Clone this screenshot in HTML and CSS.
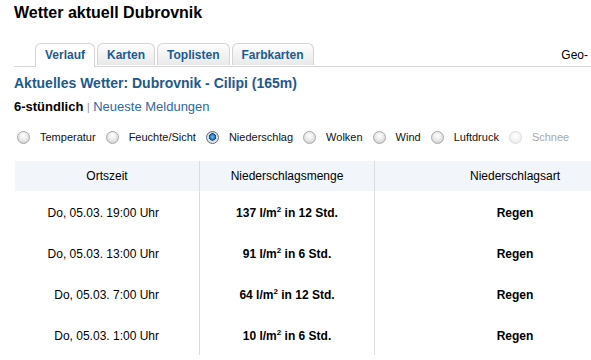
FILE: index.html
```html
<!DOCTYPE html>
<html lang="de">
<head>
<meta charset="utf-8">
<title>Wetter aktuell Dubrovnik</title>
<link rel="stylesheet" href="styles.css">
</head>
<body>
<div class="page">
  <h1 class="title">Wetter aktuell Dubrovnik</h1>
  <div class="tabbar">
    <ul class="tabs">
      <li class="tab active">Verlauf</li>
      <li class="tab">Karten</li>
      <li class="tab">Toplisten</li>
      <li class="tab">Farbkarten</li>
    </ul>
    <span class="geo">Geo-</span>
  </div>
  <h2 class="station">Aktuelles Wetter: Dubrovnik - Cilipi (165m)</h2>
  <div class="sub"><b>6-stündlich</b> <span class="sep">|</span> <a class="link">Neueste Meldungen</a></div>
  <div class="radios">
    <label class="opt"><span class="radio"></span>Temperatur</label>
    <label class="opt"><span class="radio"></span>Feuchte/Sicht</label>
    <label class="opt"><span class="radio checked"></span>Niederschlag</label>
    <label class="opt"><span class="radio"></span>Wolken</label>
    <label class="opt"><span class="radio"></span>Wind</label>
    <label class="opt"><span class="radio"></span>Luftdruck</label>
    <label class="opt disabled"><span class="radio"></span>Schnee</label>
  </div>
  <table class="data">
    <thead>
      <tr><th class="c1">Ortszeit</th><th class="c2">Niederschlagsmenge</th><th class="c3">Niederschlagsart</th></tr>
    </thead>
    <tbody>
      <tr><td class="c1">Do, 05.03. 19:00 Uhr</td><td class="c2">137 l/m<sup>2</sup> in 12 Std.</td><td class="c3">Regen</td></tr>
      <tr><td class="c1">Do, 05.03. 13:00 Uhr</td><td class="c2">91 l/m<sup>2</sup> in 6 Std.</td><td class="c3">Regen</td></tr>
      <tr><td class="c1">Do, 05.03. 7:00 Uhr</td><td class="c2">64 l/m<sup>2</sup> in 12 Std.</td><td class="c3">Regen</td></tr>
      <tr><td class="c1">Do, 05.03. 1:00 Uhr</td><td class="c2">10 l/m<sup>2</sup> in 6 Std.</td><td class="c3">Regen</td></tr>
    </tbody>
  </table>
</div>
</body>
</html>
```
FILE: styles.css
```css
html, body {
  margin: 0;
  padding: 0;
  background: #fff;
}
body {
  font-family: "Liberation Sans", Arial, sans-serif;
  color: #000;
  overflow: hidden;
}
.page {
  width: 577px;
  height: 360px;
  padding-left: 14px;
  overflow: hidden;
}
.title {
  margin: 0;
  padding-top: 4px;
  font-size: 16px;
  line-height: 18px;
  font-weight: bold;
}
.tabbar {
  margin-top: 21px;
  display: flex;
  align-items: flex-end;
  border-bottom: 1px solid #d6d6d6;
  height: 23px;
}
.tabs {
  list-style: none;
  margin: 0;
  padding: 0 0 0 21px;
  display: flex;
  gap: 2px;
}
.tab {
  height: 22px;
  box-sizing: border-box;
  padding: 0 9px;
  border: 1px solid #d4d4d4;
  border-bottom: none;
  border-radius: 6px 6px 0 0;
  background: linear-gradient(#fdfdfd, #e9e9e9);
  font-size: 12px;
  font-weight: bold;
  line-height: 22px;
  color: #1d5a94;
}
.tab.active {
  height: 24px;
  margin-bottom: -1px;
  background: #fff;
  line-height: 22px;
}
.geo {
  margin-left: auto;
  font-size: 12px;
  line-height: 22px;
  padding-right: 3px;
}
.station {
  margin: 0;
  padding-top: 8px;
  font-size: 14px;
  line-height: 17px;
  font-weight: bold;
  color: #22598b;
}
.sub {
  margin-top: 7px;
  font-size: 13px;
  line-height: 16px;
}
.sep {
  color: #888;
  font-size: 10px;
}
.link {
  color: #2d69a6;
}
.radios {
  display: flex;
  align-items: center;
  margin-top: 13px;
  padding-left: 3px;
  height: 16px;
  font-size: 11px;
  color: #111;
}
.opt {
  display: flex;
  align-items: center;
  margin-right: 10px;
}
.radio {
  width: 11px;
  height: 11px;
  border-radius: 50%;
  border: 1px solid #a8a8a8;
  background: radial-gradient(circle at 50% 35%, #ffffff 0%, #e8e8e8 50%, #c4c4c4 100%);
  margin-right: 10px;
  box-sizing: content-box;
}
.radio.checked {
  border-color: #5a6b7a;
  background: radial-gradient(circle at 50% 45%, #7ec3f2 0%, #1e78c8 30%, #0f3d66 42%, #d9dde2 48%, #f2f2f2 100%);
}
.opt.disabled {
  color: #a8a8a8;
}
.opt.disabled .radio {
  border-color: #dcdcdc;
  background: radial-gradient(circle at 50% 35%, #ffffff 0%, #f2f2f2 60%, #e2e2e2 100%);
}
.data {
  margin-top: 16px;
  margin-left: 1px;
  width: 640px;
  border-collapse: collapse;
  table-layout: fixed;
  font-size: 12px;
}
.data th {
  background: #f2f5f9;
  font-weight: normal;
  height: 30px;
  padding: 0;
  text-align: center;
}
.data td {
  height: 38px;
  padding: 3px 0 0;
  text-align: center;
  font-weight: bold;
}
.data .c1 {
  width: 184px;
  border-right: 1px solid #dcdcdc;
}
.data .c2 {
  width: 174px;
  border-right: 1px solid #dcdcdc;
}
.data td.c1 {
  text-align: right;
  padding-right: 40px;
  font-weight: normal;
}
sup {
  font-size: 8px;
  line-height: 0;
  vertical-align: 5px;
}
```
